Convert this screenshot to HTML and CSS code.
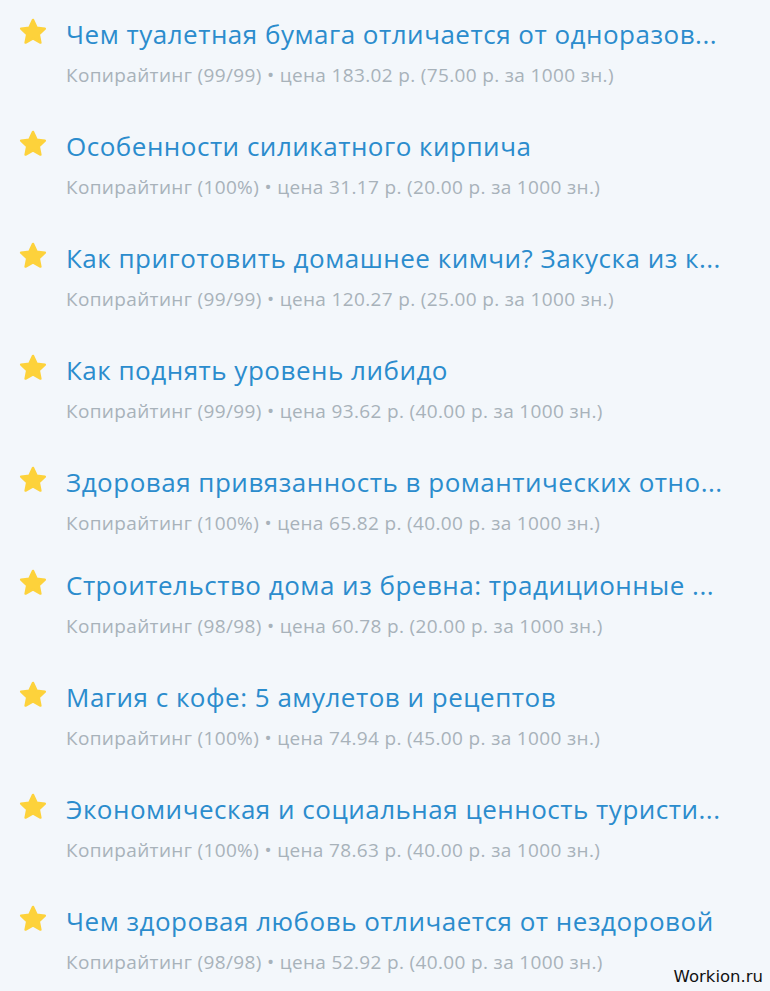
FILE: index.html
```html
<!DOCTYPE html>
<html lang="ru">
<head>
<meta charset="utf-8">
<title>Заказы</title>
<link rel="stylesheet" href="styles.css">
</head>
<body>
<ul class="orders">
  <li class="order">
    <svg class="star" viewBox="0 0 24 24"><path d="M12 1.6l3.1 6.6 7.1.9-5.2 4.9 1.4 7.1L12 17.6l-6.4 3.5 1.4-7.1-5.2-4.9 7.1-.9z"/></svg>
    <div class="info">
      <a class="title" href="#">Чем туалетная бумага отличается от одноразов...</a>
      <div class="meta">Копирайтинг (99/99) • цена 183.02 р. (75.00 р. за 1000 зн.)</div>
    </div>
  </li>
  <li class="order">
    <svg class="star" viewBox="0 0 24 24"><path d="M12 1.6l3.1 6.6 7.1.9-5.2 4.9 1.4 7.1L12 17.6l-6.4 3.5 1.4-7.1-5.2-4.9 7.1-.9z"/></svg>
    <div class="info">
      <a class="title" href="#">Особенности силикатного кирпича</a>
      <div class="meta">Копирайтинг (100%) • цена 31.17 р. (20.00 р. за 1000 зн.)</div>
    </div>
  </li>
  <li class="order">
    <svg class="star" viewBox="0 0 24 24"><path d="M12 1.6l3.1 6.6 7.1.9-5.2 4.9 1.4 7.1L12 17.6l-6.4 3.5 1.4-7.1-5.2-4.9 7.1-.9z"/></svg>
    <div class="info">
      <a class="title" href="#">Как приготовить домашнее кимчи? Закуска из к...</a>
      <div class="meta">Копирайтинг (99/99) • цена 120.27 р. (25.00 р. за 1000 зн.)</div>
    </div>
  </li>
  <li class="order">
    <svg class="star" viewBox="0 0 24 24"><path d="M12 1.6l3.1 6.6 7.1.9-5.2 4.9 1.4 7.1L12 17.6l-6.4 3.5 1.4-7.1-5.2-4.9 7.1-.9z"/></svg>
    <div class="info">
      <a class="title" href="#">Как поднять уровень либидо</a>
      <div class="meta">Копирайтинг (99/99) • цена 93.62 р. (40.00 р. за 1000 зн.)</div>
    </div>
  </li>
  <li class="order order--tight">
    <svg class="star" viewBox="0 0 24 24"><path d="M12 1.6l3.1 6.6 7.1.9-5.2 4.9 1.4 7.1L12 17.6l-6.4 3.5 1.4-7.1-5.2-4.9 7.1-.9z"/></svg>
    <div class="info">
      <a class="title" href="#">Здоровая привязанность в романтических отно...</a>
      <div class="meta">Копирайтинг (100%) • цена 65.82 р. (40.00 р. за 1000 зн.)</div>
    </div>
  </li>
  <li class="order">
    <svg class="star" viewBox="0 0 24 24"><path d="M12 1.6l3.1 6.6 7.1.9-5.2 4.9 1.4 7.1L12 17.6l-6.4 3.5 1.4-7.1-5.2-4.9 7.1-.9z"/></svg>
    <div class="info">
      <a class="title" href="#">Строительство дома из бревна: традиционные ...</a>
      <div class="meta">Копирайтинг (98/98) • цена 60.78 р. (20.00 р. за 1000 зн.)</div>
    </div>
  </li>
  <li class="order">
    <svg class="star" viewBox="0 0 24 24"><path d="M12 1.6l3.1 6.6 7.1.9-5.2 4.9 1.4 7.1L12 17.6l-6.4 3.5 1.4-7.1-5.2-4.9 7.1-.9z"/></svg>
    <div class="info">
      <a class="title" href="#">Магия с кофе: 5 амулетов и рецептов</a>
      <div class="meta">Копирайтинг (100%) • цена 74.94 р. (45.00 р. за 1000 зн.)</div>
    </div>
  </li>
  <li class="order">
    <svg class="star" viewBox="0 0 24 24"><path d="M12 1.6l3.1 6.6 7.1.9-5.2 4.9 1.4 7.1L12 17.6l-6.4 3.5 1.4-7.1-5.2-4.9 7.1-.9z"/></svg>
    <div class="info">
      <a class="title" href="#">Экономическая и социальная ценность туристи...</a>
      <div class="meta">Копирайтинг (100%) • цена 78.63 р. (40.00 р. за 1000 зн.)</div>
    </div>
  </li>
  <li class="order">
    <svg class="star" viewBox="0 0 24 24"><path d="M12 1.6l3.1 6.6 7.1.9-5.2 4.9 1.4 7.1L12 17.6l-6.4 3.5 1.4-7.1-5.2-4.9 7.1-.9z"/></svg>
    <div class="info">
      <a class="title" href="#">Чем здоровая любовь отличается от нездоровой</a>
      <div class="meta">Копирайтинг (98/98) • цена 52.92 р. (40.00 р. за 1000 зн.)</div>
    </div>
  </li>
</ul>
<div class="watermark">Workion.ru</div>
</body>
</html>
```
FILE: styles.css
```css
html, body {
  margin: 0;
  padding: 0;
  background: #f3f7fb;
  height: 100%;
  overflow: hidden;
}

body {
  font-family: "Open Sans", "Noto Sans", sans-serif;
  position: relative;
}

.orders {
  list-style: none;
  margin: 0;
  padding: 17px 0 0 20px;
  display: flex;
  flex-direction: column;
  gap: 42px;
}

.order {
  display: flex;
  align-items: flex-start;
  gap: 19px;
}

.order--tight {
  margin-bottom: -9px;
}

.star {
  width: 28px;
  height: 28px;
  flex: none;
  fill: #fdd23b;
  stroke: #fdd23b;
  stroke-width: 2;
  stroke-linejoin: round;
  margin: 1px 0 0 -1px;
}

.info {
  display: flex;
  flex-direction: column;
  gap: 12px;
}

.title {
  font-size: 26px;
  line-height: 34px;
  letter-spacing: 0.5px;
  color: #2b8ccd;
  text-decoration: none;
  white-space: nowrap;
}

.meta {
  font-size: 19px;
  line-height: 24px;
  letter-spacing: 0.35px;
  color: #a8b2ba;
  white-space: nowrap;
}

.watermark {
  position: absolute;
  right: 7px;
  bottom: 5px;
  font-family: "DejaVu Sans", sans-serif;
  font-size: 16.5px;
  color: #111;
}
```
